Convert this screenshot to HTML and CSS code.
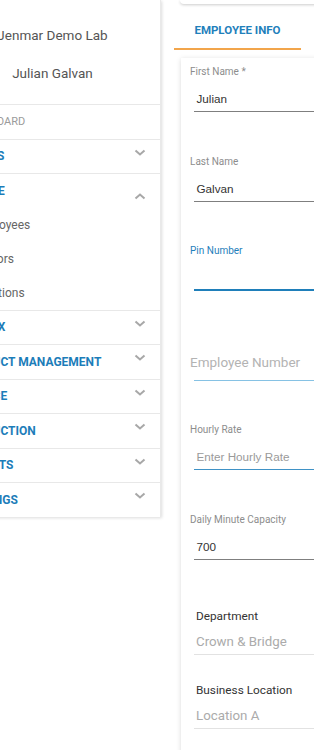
FILE: index.html
```html
<!DOCTYPE html>
<html lang="en">
<head>
<meta charset="utf-8">
<title>Employee Info</title>
<link rel="stylesheet" href="styles.css">
</head>
<body>
<div class="page">
  <aside class="sidebar">
    <div class="sb-head">
      <div class="lab-name">Jenmar Demo Lab</div>
      <div class="user-name">Julian Galvan</div>
    </div>
    <nav class="menu">
      <div class="menu-row menu-plain">DASHBOARD</div>
      <div class="menu-row"><span class="menu-label">ALERTS</span><svg class="chev chev-down" width="12" height="7" viewBox="0 0 12 7"><path d="M1.5 1.5L6 5.5 10.5 1.5"/></svg></div>
      <div class="menu-row"><span class="menu-label">PEOPLE</span><svg class="chev chev-up" width="12" height="7" viewBox="0 0 12 7"><path d="M1.5 5.5L6 1.5 10.5 5.5"/></svg></div>
      <div class="submenu">
        <div class="sub-row">Employees</div>
        <div class="sub-row">Doctors</div>
        <div class="sub-row">Locations</div>
      </div>
      <div class="menu-row"><span class="menu-label">MATRIX</span><svg class="chev chev-down" width="12" height="7" viewBox="0 0 12 7"><path d="M1.5 1.5L6 5.5 10.5 1.5"/></svg></div>
      <div class="menu-row"><span class="menu-label">PRODUCT MANAGEMENT</span><svg class="chev chev-down" width="12" height="7" viewBox="0 0 12 7"><path d="M1.5 1.5L6 5.5 10.5 1.5"/></svg></div>
      <div class="menu-row"><span class="menu-label">INVOICE</span><svg class="chev chev-down" width="12" height="7" viewBox="0 0 12 7"><path d="M1.5 1.5L6 5.5 10.5 1.5"/></svg></div>
      <div class="menu-row"><span class="menu-label">PRODUCTION</span><svg class="chev chev-down" width="12" height="7" viewBox="0 0 12 7"><path d="M1.5 1.5L6 5.5 10.5 1.5"/></svg></div>
      <div class="menu-row"><span class="menu-label">REPORTS</span><svg class="chev chev-down" width="12" height="7" viewBox="0 0 12 7"><path d="M1.5 1.5L6 5.5 10.5 1.5"/></svg></div>
      <div class="menu-row"><span class="menu-label">SETTINGS</span><svg class="chev chev-down" width="12" height="7" viewBox="0 0 12 7"><path d="M1.5 1.5L6 5.5 10.5 1.5"/></svg></div>
    </nav>
  </aside>

  <main class="main">
    <div class="top-card"></div>
    <div class="tabs">
      <div class="tab tab-active">EMPLOYEE INFO</div>
    </div>
    <section class="form-card">
      <div class="field">
        <div class="field-label">First Name *</div>
        <div class="field-input">Julian</div>
      </div>
      <div class="field">
        <div class="field-label">Last Name</div>
        <div class="field-input">Galvan</div>
      </div>
      <div class="field">
        <div class="field-label field-label-focus">Pin Number</div>
        <div class="field-input field-input-focus"></div>
      </div>
      <div class="field field-floating">
        <div class="float-label">Employee Number</div>
        <div class="field-input field-input-light"></div>
      </div>
      <div class="field">
        <div class="field-label">Hourly Rate</div>
        <div class="field-input field-input-blue"><span class="placeholder">Enter Hourly Rate</span></div>
      </div>
      <div class="field">
        <div class="field-label">Daily Minute Capacity</div>
        <div class="field-input">700</div>
      </div>

      <div class="selects">
        <div class="select-field">
          <div class="select-label">Department</div>
          <div class="select-value">Crown &amp; Bridge</div>
        </div>
        <div class="select-field">
          <div class="select-label">Business Location</div>
          <div class="select-value">Location A</div>
        </div>
      </div>
    </section>
  </main>
</div>
</body>
</html>
```

FILE: styles.css
```css
html, body {
  margin: 0;
  padding: 0;
  background: #ffffff;
  overflow: hidden;
}

body {
  font-family: Roboto, "Noto Sans", Arial, sans-serif;
  width: 314px;
  height: 750px;
}

.page {
  display: flex;
  align-items: flex-start;
  width: 314px;
}

/* ---------- Sidebar ---------- */
.sidebar {
  flex-shrink: 0;
  width: 216px;
  margin-left: -55px;
  background: #ffffff;
  box-shadow: 1px 1px 3px rgba(0, 0, 0, 0.14);
  border-right: 1px solid #e9e9e9;
  box-sizing: border-box;
}

.sb-head {
  padding: 25px 0 21px;
  text-align: center;
  color: #555555;
  font-size: 13.5px;
}

.lab-name,
.user-name {
  line-height: 20px;
}

.user-name {
  margin-top: 18px;
}

.menu-row {
  display: flex;
  align-items: center;
  justify-content: space-between;
  box-sizing: border-box;
  height: 34.5px;
  border-top: 1px solid #e8e8e8;
  padding: 0 14px 0 16px;
  white-space: nowrap;
}

.menu-plain {
  font-size: 11px;
  color: #9b9b9b;
}

.menu-label {
  font-size: 12px;
  font-weight: 700;
  color: #1c7db9;
}

.chev {
  flex-shrink: 0;
}

.chev path {
  fill: none;
  stroke: #a8a8a8;
  stroke-width: 2;
}

.chev-down {
  margin-bottom: 8px;
}

.chev-up {
  margin-top: 11px;
}

.sub-row {
  height: 34px;
  display: flex;
  align-items: center;
  padding-left: 27px;
  font-size: 12px;
  color: #666666;
}

/* ---------- Main ---------- */
.main {
  flex: 1;
  min-width: 0;
  padding-left: 13px;
}

.top-card {
  height: 4px;
  margin: 0 -20px 0 6px;
  background: #ffffff;
  border-bottom-left-radius: 4px;
  box-shadow: 0 1px 3px rgba(0, 0, 0, 0.2);
}

.tabs {
  display: flex;
  margin-top: 4px;
}

.tab {
  width: 127px;
  box-sizing: border-box;
  text-align: center;
  padding: 14px 0 10px;
  line-height: 16px;
  font-size: 11.5px;
  font-weight: 700;
  color: #1f80bb;
  white-space: nowrap;
}

.tab-active {
  border-bottom: 2px solid #f2a54b;
}

.form-card {
  margin: 8px -30px 0 7px;
  padding: 7px 10px 120px 9px;
  background: #ffffff;
  box-shadow: 0 1px 5px rgba(0, 0, 0, 0.15);
}

.field {
  margin-bottom: 42.5px;
}

.field-label {
  font-size: 10px;
  line-height: 14px;
  color: #8d8d8d;
  white-space: nowrap;
}

.field-label-focus {
  color: #1f80bb;
}

.field-input {
  margin: 7px 0 0 4px;
  height: 26px;
  box-sizing: border-box;
  display: flex;
  align-items: center;
  padding-left: 2.5px;
  border-bottom: 1px solid #7f7f7f;
  font-family: "Liberation Sans", Arial, sans-serif;
  font-size: 11.7px;
  color: #333333;
}

.field-input-focus {
  border-bottom: 2px solid #1f7fba;
}

.field-input-light {
  border-bottom: 1px solid #86c2e4;
}

.field-input-blue {
  border-bottom: 1px solid #3f92c6;
}

.placeholder {
  color: #9a9a9a;
}

.field-floating {
  position: relative;
  padding-top: 14px;
}

.float-label {
  position: absolute;
  left: 0;
  top: 20.5px;
  line-height: 16px;
  font-size: 13.5px;
  color: #b3b3b3;
  white-space: nowrap;
}

.selects {
  padding-top: 7px;
}

.select-field {
  margin: 0 0 28px 4px;
}

.select-label {
  padding-left: 2px;
  font-size: 11.8px;
  line-height: 14px;
  color: #333333;
  white-space: nowrap;
}

.select-value {
  margin-top: 5px;
  height: 27px;
  box-sizing: border-box;
  display: flex;
  align-items: center;
  padding-left: 2px;
  border-bottom: 1px solid #e2e2e2;
  font-size: 13.3px;
  color: #ababab;
  white-space: nowrap;
}
```
